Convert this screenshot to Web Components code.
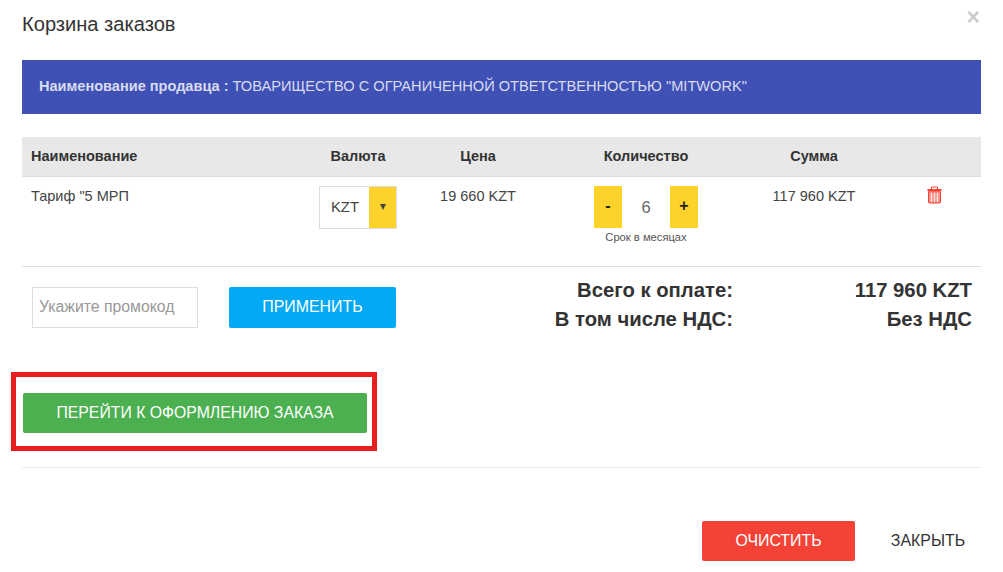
<!DOCTYPE html>
<html lang="ru">
<head>
<meta charset="utf-8">
<title>Корзина заказов</title>
<style>
  html, body { margin: 0; background: #fff; }
  body { font-family: "Liberation Sans", Arial, sans-serif; color: #333; overflow: hidden; }
</style>
</head>
<body>
<cart-modal>
  <cart-header slot="header">Корзина заказов</cart-header>
  <seller-banner slot="banner" label="Наименование продавца :">ТОВАРИЩЕСТВО С ОГРАНИЧЕННОЙ ОТВЕТСТВЕННОСТЬЮ "MITWORK"</seller-banner>
  <cart-table slot="table"></cart-table>
  <cart-summary slot="summary"></cart-summary>
  <checkout-box slot="checkout"><cart-button color="#4caf50" w="344" h="40" size="15.8" pad="0">ПЕРЕЙТИ К ОФОРМЛЕНИЮ ЗАКАЗА</cart-button></checkout-box>
  <cart-footer slot="footer"></cart-footer>
</cart-modal>

<script>
class CartModal extends HTMLElement {
  constructor() {
    super();
    this.attachShadow({ mode: 'open' });
    this.shadowRoot.innerHTML = `
      <style>
        :host { display: block; width: 1003px; height: 572px; box-sizing: border-box; padding: 0 22px; }
        .rule { height: 1px; background: #eee; margin-top: 16px; }
      </style>
      <slot name="header"></slot>
      <slot name="banner"></slot>
      <slot name="table"></slot>
      <slot name="summary"></slot>
      <slot name="checkout"></slot>
      <div class="rule"></div>
      <slot name="footer"></slot>
    `;
  }
}

class CartHeader extends HTMLElement {
  constructor() {
    super();
    this.attachShadow({ mode: 'open' });
    this.shadowRoot.innerHTML = `
      <style>
        :host { display: flex; justify-content: space-between; height: 60px; }
        .title { font-size: 20.1px; line-height: 22px; margin-top: 13px; color: #333; }
        .close { font-size: 23px; font-weight: bold; line-height: 23px; color: #000; opacity: .2; margin: 6px 1px 0 0; }
      </style>
      <div class="title"><slot></slot></div>
      <div class="close">×</div>
    `;
  }
}

class SellerBanner extends HTMLElement {
  constructor() {
    super();
    this.attachShadow({ mode: 'open' });
    const label = this.getAttribute('label');
    this.shadowRoot.innerHTML = `
      <style>
        :host { display: flex; align-items: center; height: 54px; box-sizing: border-box; padding: 0 0 2px 17px; background: #3f51b5; color: #d9dcf0; font-size: 14.63px; width: 959px; }
        b { margin-right: 4px; font-size: 14.55px; }
      </style>
      <b>${label}</b> <slot></slot>
    `;
  }
}

class CartTable extends HTMLElement {
  constructor() {
    super();
    this.attachShadow({ mode: 'open' });
    this.shadowRoot.innerHTML = `
      <style>
        :host { display: block; width: 959px; margin-top: 23px; font-size: 14.5px; color: #333; }
        .row { display: grid; grid-template-columns: 276px 120px 120px 216px 120px 1fr; }
        .head { height: 39px; align-items: center; background: #e8e8e8; border-bottom: 1px solid #ddd; font-weight: bold; padding-bottom: 0; }
        .head > div { margin-top: -2px; }
        .body { height: 89px; border-bottom: 1px solid #ddd; color: #444; }
        .name { padding-left: 9px; }
        .c { text-align: center; }
        .body > div { padding-top: 11px; line-height: 16px; }
        .body > .ctl { padding-top: 9px; display: flex; flex-direction: column; align-items: center; }
        .caption { font-size: 11.2px; line-height: 13px; margin-top: 3px; color: #555; }
        .trash { padding-left: 53px; padding-top: 9px !important; }
        svg { display: block; }
      </style>
      <div class="row head">
        <div class="name">Наименование</div>
        <div class="c">Валюта</div>
        <div class="c">Цена</div>
        <div class="c">Количество</div>
        <div class="c">Сумма</div>
        <div></div>
      </div>
      <div class="row body">
        <div class="name">Тариф "5 МРП</div>
        <div class="ctl"><currency-select></currency-select></div>
        <div class="c">19 660 KZT</div>
        <div class="ctl"><qty-stepper value="6"></qty-stepper><div class="caption">Срок в месяцах</div></div>
        <div class="c">117 960 KZT</div>
        <div class="trash">
          <svg width="15" height="18" viewBox="0 0 15 18">
            <rect x="1.5" y="5" width="12" height="12" rx="1" fill="#f98b84" stroke="#f44336"/>
            <path d="M4.5 7v9M7.5 7v9M10.5 7v9" stroke="#fde3e1" stroke-width="1.4"/>
            <rect x="0.5" y="3" width="14" height="2" fill="#f44336"/>
            <path d="M4.5 3V1h6v2" fill="none" stroke="#f44336"/>
          </svg>
        </div>
      </div>
    `;
  }
}

class CurrencySelect extends HTMLElement {
  constructor() {
    super();
    this.attachShadow({ mode: 'open' });
    this.shadowRoot.innerHTML = `
      <style>
        :host { display: flex; width: 78px; height: 43px; box-sizing: border-box; border: 1px solid #ddd; font-size: 14.8px; color: #444; }
        .val { flex: 1; display: flex; align-items: center; padding: 0 0 2px 11px; }
        .arrow { width: 27px; background: #fdd22b; display: flex; align-items: center; justify-content: center; padding-bottom: 2px; box-sizing: border-box; }
        .arrow i { display: block; width: 0; height: 0; border: solid transparent; border-width: 6px 3.5px 0; border-top-color: #444; }
      </style>
      <div class="val">KZT</div>
      <div class="arrow"><i></i></div>
    `;
  }
}

class QtyStepper extends HTMLElement {
  constructor() {
    super();
    this.attachShadow({ mode: 'open' });
    this.shadowRoot.innerHTML = `
      <style>
        :host { display: flex; width: 104px; height: 42px; }
        .btn { width: 28px; background: #fdd22b; display: flex; align-items: center; justify-content: center; padding-bottom: 3px; box-sizing: border-box; font-size: 16px; font-weight: bold; color: #222; }
        .val { flex: 1; display: flex; align-items: center; justify-content: center; font-size: 16.5px; color: #666; }
      </style>
      <div class="btn">-</div>
      <div class="val">${this.getAttribute('value')}</div>
      <div class="btn">+</div>
    `;
  }
}

class CartButton extends HTMLElement {
  constructor() {
    super();
    this.attachShadow({ mode: 'open' });
    const pad = this.getAttribute('pad') || 2;
    this.shadowRoot.innerHTML = `
      <style>
        :host {
          display: flex; align-items: center; justify-content: center; box-sizing: border-box;
          width: ${this.getAttribute('w')}px; height: ${this.getAttribute('h')}px;
          background: ${this.getAttribute('color')}; color: #fff; border-radius: 2px;
          font-size: ${this.getAttribute('size') || 16}px; padding-bottom: ${pad}px;
        }
      </style>
      <slot></slot>
    `;
  }
}

class CartSummary extends HTMLElement {
  constructor() {
    super();
    this.attachShadow({ mode: 'open' });
    this.shadowRoot.innerHTML = `
      <style>
        :host { display: flex; width: 959px; margin-top: 20px; }
        .promo { width: 166px; height: 41px; box-sizing: border-box; border: 1px solid #ddd; margin-left: 10px; padding: 0 0 2px 6px; display: flex; align-items: center; font-size: 15.8px; color: #999; }
        cart-button { margin-left: 31px; }
        .totals { margin-left: auto; display: grid; grid-template-columns: auto 239px; font-size: 20.3px; font-weight: bold; line-height: 29px; margin-right: 9px; margin-top: -11px; color: #333; text-align: right; height: 58px; }
      </style>
      <div class="promo">Укажите промокод</div>
      <cart-button color="#03a9f4" w="167" h="41" size="15.9">ПРИМЕНИТЬ</cart-button>
      <div class="totals">
        <div>Всего к оплате:</div><div>117 960 KZT</div>
        <div>В том числе НДС:</div><div>Без НДС</div>
      </div>
    `;
  }
}

class CheckoutBox extends HTMLElement {
  constructor() {
    super();
    this.attachShadow({ mode: 'open' });
    this.shadowRoot.innerHTML = `
      <style>
        :host { display: block; width: 366px; height: 79px; box-sizing: border-box; margin: 38px 0 0 -11px; padding: 16px 0 0 7px; border: 5px solid #e81f1f; }
      </style>
      <slot></slot>
    `;
  }
}

class CartFooter extends HTMLElement {
  constructor() {
    super();
    this.attachShadow({ mode: 'open' });
    this.shadowRoot.innerHTML = `
      <style>
        :host { display: flex; justify-content: flex-end; align-items: center; width: 959px; margin-top: 53px; }
        .close { width: 126px; padding-left: 20px; box-sizing: border-box; text-align: center; font-size: 15.9px; color: #333; }
      </style>
      <cart-button color="#f44336" w="153" h="40" size="15.9" pad="0">ОЧИСТИТЬ</cart-button>
      <div class="close">ЗАКРЫТЬ</div>
    `;
  }
}

customElements.define('cart-modal', CartModal);
customElements.define('cart-header', CartHeader);
customElements.define('seller-banner', SellerBanner);
customElements.define('currency-select', CurrencySelect);
customElements.define('qty-stepper', QtyStepper);
customElements.define('cart-button', CartButton);
customElements.define('cart-table', CartTable);
customElements.define('cart-summary', CartSummary);
customElements.define('checkout-box', CheckoutBox);
customElements.define('cart-footer', CartFooter);
</script>
</body>
</html>
